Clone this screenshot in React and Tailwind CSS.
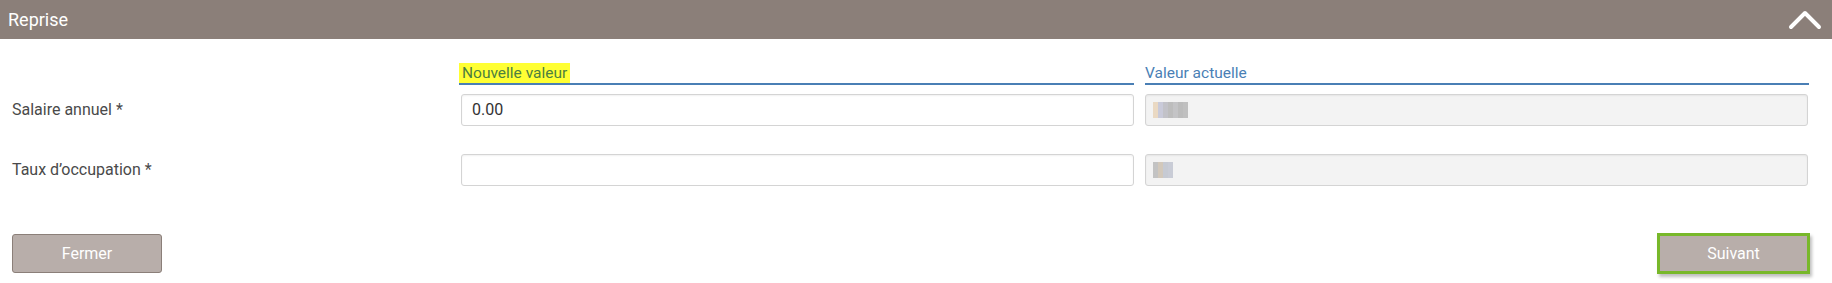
import React from "react";

function Blur({ cells }) {
  // pixelated placeholder for a masked value
  return (
    <div className="flex h-[16px]">
      {cells.map((c, i) => (
        <div key={i} className="w-[5px] h-full" style={{ background: c }} />
      ))}
    </div>
  );
}

export default function App() {
  const rows = [
    {
      label: "Salaire annuel *",
      value: "0.00",
      current: ["#ead9c3", "#c9cad9", "#c2c2c8", "#bdbdbd", "#c4c4c6", "#bcbcbc", "#c0c0c0"],
    },
    {
      label: "Taux d\u2019occupation *",
      value: "",
      current: ["#c3c3c3", "#d2c8bb", "#c6cad3", "#c9ccd6"],
    },
  ];

  return (
    <div className="w-[1832px] h-[283px] bg-white font-['Roboto',sans-serif]">
      {/* Header bar */}
      <div className="h-[39px] bg-[#8b7f79] flex items-center justify-between pl-[8px] pr-[10px]">
        <span className="text-white text-[18px]">Reprise</span>
        <svg width="34" height="22" viewBox="0 0 34 22" fill="none">
          <polyline points="3,18 17,4 31,18" stroke="white" strokeWidth="4" strokeLinecap="round" strokeLinejoin="round" />
        </svg>
      </div>

      {/* Column headers */}
      <div className="flex mt-[24px]">
        <div className="w-[459px]" />
        <div className="w-[675px] flex border-b-2 border-[#4a7fb5]">
          <span className="bg-[#ffff33] text-[#4d8040] text-[15.5px] leading-[20px] px-[3px]">
            Nouvelle valeur
          </span>
        </div>
        <div className="w-[11px]" />
        <div className="w-[664px] flex border-b-2 border-[#4a7fb5]">
          <span className="text-[#4a7fb5] text-[15.5px] leading-[20px]">Valeur actuelle</span>
        </div>
      </div>

      {/* Field rows */}
      <div className="flex flex-col gap-[28px] mt-[9px]">
        {rows.map((r) => (
          <div key={r.label} className="flex items-center">
            <div className="w-[461px] pl-[12px] text-[16px] text-[#4a4a4a]">{r.label}</div>
            <div className="w-[673px] h-[32px] border border-[#d4d4d4] rounded-[3px] shadow-[inset_0_1px_2px_rgba(0,0,0,0.06)] flex items-center px-[10px] text-[16px] text-[#333]">
              {r.value}
            </div>
            <div className="w-[11px]" />
            <div className="w-[663px] h-[32px] border border-[#d4d4d4] rounded-[3px] bg-[#f3f3f3] shadow-[inset_0_1px_2px_rgba(0,0,0,0.06)] flex items-center px-[7px]">
              <Blur cells={r.current} />
            </div>
          </div>
        ))}
      </div>

      {/* Buttons */}
      <div className="flex justify-between items-center mt-[47px] pl-[12px] pr-[22px]">
        <button className="w-[150px] h-[39px] bg-[#b8aeaa] border border-[#8b7f79] rounded-[3px] text-white text-[16px]">
          Fermer
        </button>
        <button className="w-[153px] h-[41px] bg-[#b8aeaa] border-[3px] border-[#78b82a] text-white text-[16px] shadow-[2px_3px_3px_rgba(0,0,0,0.25)]">
          Suivant
        </button>
      </div>
    </div>
  );
}
